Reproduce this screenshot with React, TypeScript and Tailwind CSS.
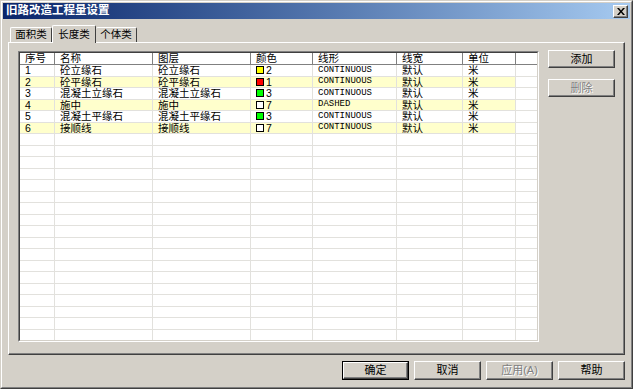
import React from 'react'

const cols = ['w-[35px]', 'w-[98px]', 'w-[98px]', 'w-[62px]', 'w-[84px]', 'w-[66px]', 'w-[53px]']
const heads = ['序号', '名称', '图层', '颜色', '线形', '线宽', '单位']

interface Row {
  no: string
  name: string
  swatch: string
  ci: string
  lt: string
}

const rows: Row[] = [
  { no: '1', name: '砼立缘石', swatch: 'bg-[#ffff00]', ci: '2', lt: 'CONTINUOUS' },
  { no: '2', name: '砼平缘石', swatch: 'bg-[#ff0000]', ci: '1', lt: 'CONTINUOUS' },
  { no: '3', name: '混凝土立缘石', swatch: 'bg-[#00ff00]', ci: '3', lt: 'CONTINUOUS' },
  { no: '4', name: '施中', swatch: 'bg-white', ci: '7', lt: 'DASHED' },
  { no: '5', name: '混凝土平缘石', swatch: 'bg-[#00ff00]', ci: '3', lt: 'CONTINUOUS' },
  { no: '6', name: '接顺线', swatch: 'bg-white', ci: '7', lt: 'CONTINUOUS' },
]

const cjk = { fontFamily: '"Liberation Sans", "Noto Sans CJK SC", sans-serif' }

function Btn({ label, disabled, def }: { label: string; disabled?: boolean; def?: boolean }) {
  const inner = (
    <div
      className={
        'flex h-full w-full items-center justify-center border border-t-white border-l-white border-r-[#404040] border-b-[#404040] bg-[#d4d0c8] text-[11px] shadow-[inset_-1px_-1px_#808080] ' +
        (disabled ? 'text-[#808080] [text-shadow:1px_1px_0_#fff]' : 'text-black')
      }
    >
      {label}
    </div>
  )
  if (def) return <div className="h-[19px] w-[67px] border border-black">{inner}</div>
  return <div className="h-[19px] w-[67px]">{inner}</div>
}

function Cell({ w, bg, children }: { w: string; bg: string; children?: React.ReactNode }) {
  return (
    <div className={`${w} ${bg} flex h-full shrink-0 items-center overflow-hidden whitespace-nowrap border-r border-b border-[#e2e1dd] pl-[5px]`}>
      {children}
    </div>
  )
}

export default function App() {
  const empty = Array.from({ length: 18 })
  return (
    <div className="h-[389px] w-[633px] border border-t-[#d4d0c8] border-l-[#d4d0c8] border-r-[#404040] border-b-[#404040] bg-[#d4d0c8] select-none" style={cjk}>
      <div className="flex h-full w-full flex-col border border-t-white border-l-white border-r-[#808080] border-b-[#808080] p-px">
        {/* title bar */}
        <div className="flex h-[16px] shrink-0 items-center justify-between bg-linear-to-r from-[#0a246a] to-[#a6caf0] pl-[3px] pr-[2px]">
          <span className="text-[11.5px] font-bold leading-none text-white">旧路改造工程量设置</span>
          <div className="flex h-[13px] w-[15px] items-center justify-center border border-t-white border-l-white border-r-[#404040] border-b-[#404040] bg-[#d4d0c8] shadow-[inset_-1px_-1px_#808080]">
            <svg width="8" height="7" viewBox="0 0 8 7">
              <path d="M0 0h2l2 2.5L6 0h2L5 3.5 8 7H6L4 4.5 2 7H0l3-3.5z" fill="#000" />
            </svg>
          </div>
        </div>

        {/* tabs */}
        <div className="ml-[6px] mr-[5px] flex h-[23px] shrink-0 items-end pl-[1px]">
          <div className="flex h-[15px] w-[42px] items-center justify-center rounded-t-[2px] border-t border-l border-r border-t-white border-l-white border-r-[#404040] text-[10.5px]">面积类</div>
          <div className="relative z-10 -mb-px flex h-[18px] w-[44px] items-start justify-center rounded-t-[2px] border-t border-l border-r border-t-white border-l-white border-r-[#404040] bg-[#d4d0c8] pt-[1px] text-[10.5px]">长度类</div>
          <div className="flex h-[15px] w-[41px] items-center justify-center rounded-t-[2px] border-t border-r border-t-white border-r-[#404040] text-[10.5px]">个体类</div>
        </div>

        {/* panel */}
        <div className="mx-[5px] flex h-[313px] shrink-0 border border-t-white border-l-white border-r-[#404040] border-b-[#404040] pl-[9px] pt-[8px] shadow-[inset_-1px_-1px_#808080]">
          {/* list */}
          <div className="h-[291px] w-[521px] shrink-0 border border-t-[#808080] border-l-[#808080] border-r-white border-b-white">
            <div className="h-full w-full overflow-hidden border border-t-[#404040] border-l-[#404040] border-r-[#d4d0c8] border-b-[#d4d0c8] bg-white">
              <div className="flex h-[12px] text-[10.5px] leading-none">
                {heads.map((h, i) => (
                  <div key={h} className={`${cols[i]} flex h-full shrink-0 items-center border-r border-b border-[#808080] pl-[5px] shadow-[inset_1px_1px_#fff]`}>
                    {h}
                  </div>
                ))}
                <div className="flex-1 border-b border-[#808080] shadow-[inset_1px_1px_#fff]" />
              </div>
              {rows.map((r, i) => {
                const bg = i % 2 === 1 ? 'bg-[#ffffcc]' : 'bg-white'
                return (
                  <div key={r.no} className="flex h-[11.5px] text-[10.5px] leading-none">
                    <Cell w={cols[0]} bg={bg}>{r.no}</Cell>
                    <Cell w={cols[1]} bg={bg}>{r.name}</Cell>
                    <Cell w={cols[2]} bg={bg}>{r.name}</Cell>
                    <Cell w={cols[3]} bg={bg}>
                      <span className={`mr-[2px] inline-block h-[8px] w-[8px] border border-black ${r.swatch}`} />
                      {r.ci}
                    </Cell>
                    <Cell w={cols[4]} bg={bg}>
                      <span className="text-[9px]" style={{ fontFamily: '"Liberation Mono", monospace' }}>{r.lt}</span>
                    </Cell>
                    <Cell w={cols[5]} bg={bg}>默认</Cell>
                    <Cell w={cols[6]} bg={bg}>米</Cell>
                    <div className="h-full flex-1 border-b border-[#e2e1dd] bg-white" />
                  </div>
                )
              })}
              {empty.map((_, i) => (
                <div key={i} className="flex h-[11.5px]">
                  {cols.map(c => (
                    <Cell key={c + i + Math.random()} w={c} bg="bg-white" />
                  ))}
                  <div className="h-full flex-1 border-b border-[#e2e1dd]" />
                </div>
              ))}
            </div>
          </div>

          {/* side buttons */}
          <div className="ml-[9px] -mt-px flex flex-col gap-[11px]">
            <div className="h-[18px] w-[67px]">
              <div className="flex h-full w-full items-center justify-center border border-t-white border-l-white border-r-[#404040] border-b-[#404040] text-[11px] shadow-[inset_-1px_-1px_#808080]">添加</div>
            </div>
            <div className="h-[18px] w-[67px]">
              <div className="flex h-full w-full items-center justify-center border border-t-white border-l-white border-r-[#404040] border-b-[#404040] text-[11px] text-[#808080] shadow-[inset_-1px_-1px_#808080] [text-shadow:1px_1px_0_#fff]">删除</div>
            </div>
          </div>
        </div>

        {/* bottom buttons */}
        <div className="mt-[6px] flex justify-end gap-[5px] pr-[5px]">
          <Btn label="确定" def />
          <Btn label="取消" />
          <Btn label="应用(A)" disabled />
          <Btn label="帮助" />
        </div>
      </div>
    </div>
  )
}
